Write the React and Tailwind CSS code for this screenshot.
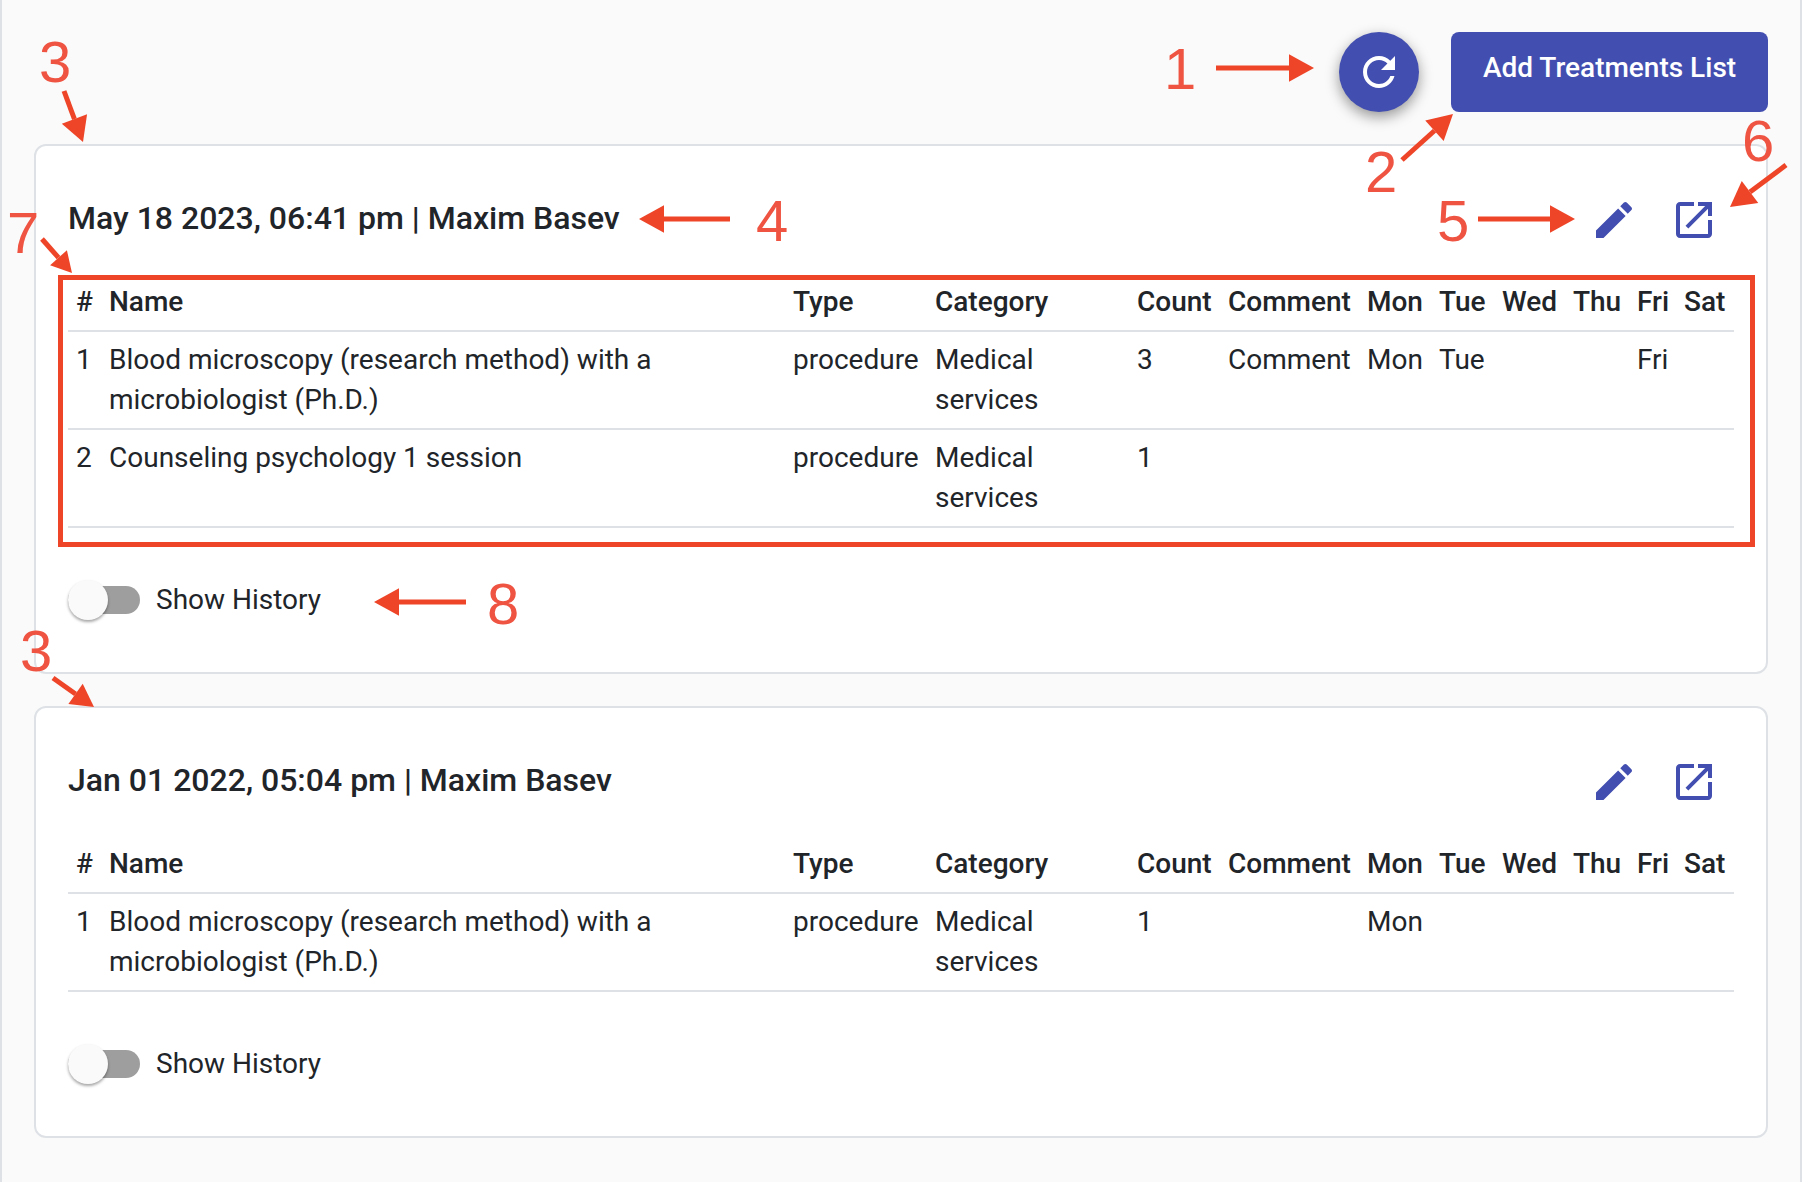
const columns = ['w-[33px]', 'w-[684px]', 'w-[142px]', 'w-[202px]', 'w-[91px]', 'w-[139px]', 'w-[72px]', 'w-[63px]', 'w-[71px]', 'w-[64px]', 'w-[47px]', 'w-[58px]'];
const headers = ['#', 'Name', 'Type', 'Category', 'Count', 'Comment', 'Mon', 'Tue', 'Wed', 'Thu', 'Fri', 'Sat'];

const cards = [
  {
    title: 'May 18 2023, 06:41 pm | Maxim Basev',
    rows: [
      ['1', 'Blood microscopy (research method) with a microbiologist (Ph.D.)', 'procedure', 'Medical services', '3', 'Comment', 'Mon', 'Tue', '', '', 'Fri', ''],
      ['2', 'Counseling psychology 1 session', 'procedure', 'Medical services', '1', '', '', '', '', '', '', ''],
    ],
  },
  {
    title: 'Jan 01 2022, 05:04 pm | Maxim Basev',
    rows: [
      ['1', 'Blood microscopy (research method) with a microbiologist (Ph.D.)', 'procedure', 'Medical services', '1', '', 'Mon', '', '', '', '', ''],
    ],
  },
];

const labels = [
  { text: '1', cls: 'left-[1162px] top-[37px]' },
  { text: '2', cls: 'left-[1363px] top-[140px]' },
  { text: '3', cls: 'left-[37px] top-[30px]' },
  { text: '4', cls: 'left-[754px] top-[189px]' },
  { text: '5', cls: 'left-[1435px] top-[189px]' },
  { text: '6', cls: 'left-[1740px] top-[109px]' },
  { text: '7', cls: 'left-[5px] top-[201px]' },
  { text: '8', cls: 'left-[485px] top-[572px]' },
  { text: '3', cls: 'left-[18px] top-[619px]' },
];

const arrows = [
  [1216, 68, 1314, 68],
  [1402, 160, 1453, 114],
  [1786, 165, 1730, 207],
  [1478, 219, 1575, 219],
  [64, 91, 83, 142],
  [730, 219, 639, 219],
  [42, 239, 72, 273],
  [466, 602, 374, 602],
  [53, 678, 94, 707],
];

function Arrow({ from, to }) {
  const [x1, y1] = from;
  const [x2, y2] = to;
  const len = Math.hypot(x2 - x1, y2 - y1);
  const ux = (x2 - x1) / len;
  const uy = (y2 - y1) / len;
  const head = Math.min(25, len * 0.45);
  const half = head * 0.55;
  const bx = x2 - ux * head;
  const by = y2 - uy * head;
  return (
    <g>
      <line x1={x1} y1={y1} x2={bx} y2={by} stroke="#ee4427" strokeWidth="5" />
      <polygon
        points={`${x2},${y2} ${bx - uy * half},${by + ux * half} ${bx + uy * half},${by - ux * half}`}
        fill="#ee4427"
      />
    </g>
  );
}

function EditIcon() {
  return (
    <svg viewBox="0 0 24 24" className="w-12 h-12 fill-[#434fb0]">
      <path d="M3 17.25V21h3.75L17.81 9.94l-3.75-3.75L3 17.25zM20.71 7.04c.39-.39.39-1.02 0-1.41l-2.34-2.34c-.39-.39-1.02-.39-1.41 0l-1.83 1.83 3.75 3.75 1.83-1.83z" />
    </svg>
  );
}

function OpenIcon() {
  return (
    <svg viewBox="0 0 24 24" className="w-12 h-12 fill-[#434fb0]">
      <path d="M19 19H5V5h7V3H5c-1.11 0-2 .9-2 2v14c0 1.1.89 2 2 2h14c1.1 0 2-.9 2-2v-7h-2v7zM14 3v2h3.59l-9.83 9.83 1.41 1.41L19 6.41V10h2V3h-7z" />
    </svg>
  );
}

function TreatmentCard({ title, rows }) {
  return (
    <div className="bg-white border-2 border-[#dee2e6] rounded-xl px-8 pt-[30px] pb-[52px]">
      <div className="flex items-center justify-between h-[88px] mb-[10px]">
        <h2 className="text-[32px] font-medium mb-1">{title}</h2>
        <div className="flex items-center gap-8 mr-4">
          <EditIcon />
          <OpenIcon />
        </div>
      </div>
      <table className="w-full table-fixed">
        <colgroup>
          {columns.map((c, i) => (
            <col key={i} className={c} />
          ))}
        </colgroup>
        <thead>
          <tr className="border-b-2 border-[#dee2e6]">
            {headers.map((h) => (
              <th key={h} className="px-2 py-2 text-left font-medium whitespace-nowrap">{h}</th>
            ))}
          </tr>
        </thead>
        <tbody>
          {rows.map((row) => (
            <tr key={row[0]} className="border-b-2 border-[#dee2e6]">
              {row.map((cell, i) => (
                <td key={i} className="px-2 py-2 align-top">{cell}</td>
              ))}
            </tr>
          ))}
        </tbody>
      </table>
      <div className="flex items-center mt-[52px] h-10">
        <div className="relative w-[72px] h-10 flex items-center">
          <div className="w-full h-7 rounded-full bg-[#9e9e9e]" />
          <div className="absolute left-0 top-0 w-10 h-10 rounded-full bg-[#fafafa] shadow-[0_2px_3px_rgba(0,0,0,0.35)]" />
        </div>
        <span className="ml-4">Show History</span>
      </div>
    </div>
  );
}

export default function App() {
  return (
    <div className="relative h-[1182px] overflow-hidden bg-[#fafafa] border-x-2 border-[#dee2e6] px-8 pt-8 text-[28px] leading-10 text-[#212529] font-['Roboto',sans-serif]">
      <div className="flex justify-end items-start gap-8 mb-8">
        <button className="w-20 h-20 rounded-full bg-[#434fb0] flex items-center justify-center shadow-[0_5px_14px_rgba(0,0,0,0.4)]">
          <svg viewBox="0 0 24 24" className="w-12 h-12 fill-white">
            <path d="M17.65 6.35C16.2 4.9 14.21 4 12 4c-4.42 0-7.99 3.58-7.99 8s3.57 8 7.99 8c3.73 0 6.84-2.55 7.73-6h-2.08c-.82 2.33-3.04 4-5.65 4-3.31 0-6-2.69-6-6s2.69-6 6-6c1.66 0 3.14.69 4.22 1.78L13 11h7V4l-2.35 2.35z" />
          </svg>
        </button>
        <button className="w-[317px] h-20 rounded-lg bg-[#434fb0] text-white font-medium pb-2">
          Add Treatments List
        </button>
      </div>

      <div className="flex flex-col gap-8">
        {cards.map((card) => (
          <TreatmentCard key={card.title} title={card.title} rows={card.rows} />
        ))}
      </div>

      {/* callouts drawn over the screenshot */}
      <div className="absolute left-[56px] top-[275px] w-[1697px] h-[272px] border-[5px] border-[#ee4427]" />
      <svg className="absolute -left-[2px] top-0 w-[1802px] h-[1182px] pointer-events-none" viewBox="0 0 1802 1182">
        {arrows.map((a, i) => (
          <Arrow key={i} from={[a[0], a[1]]} to={[a[2], a[3]]} />
        ))}
      </svg>
      {labels.map((l, i) => (
        <span key={i} className={`absolute ${l.cls} text-[58px] leading-[64px] text-[#ef5442] font-['Liberation_Sans',sans-serif]`}>
          {l.text}
        </span>
      ))}
    </div>
  );
}
